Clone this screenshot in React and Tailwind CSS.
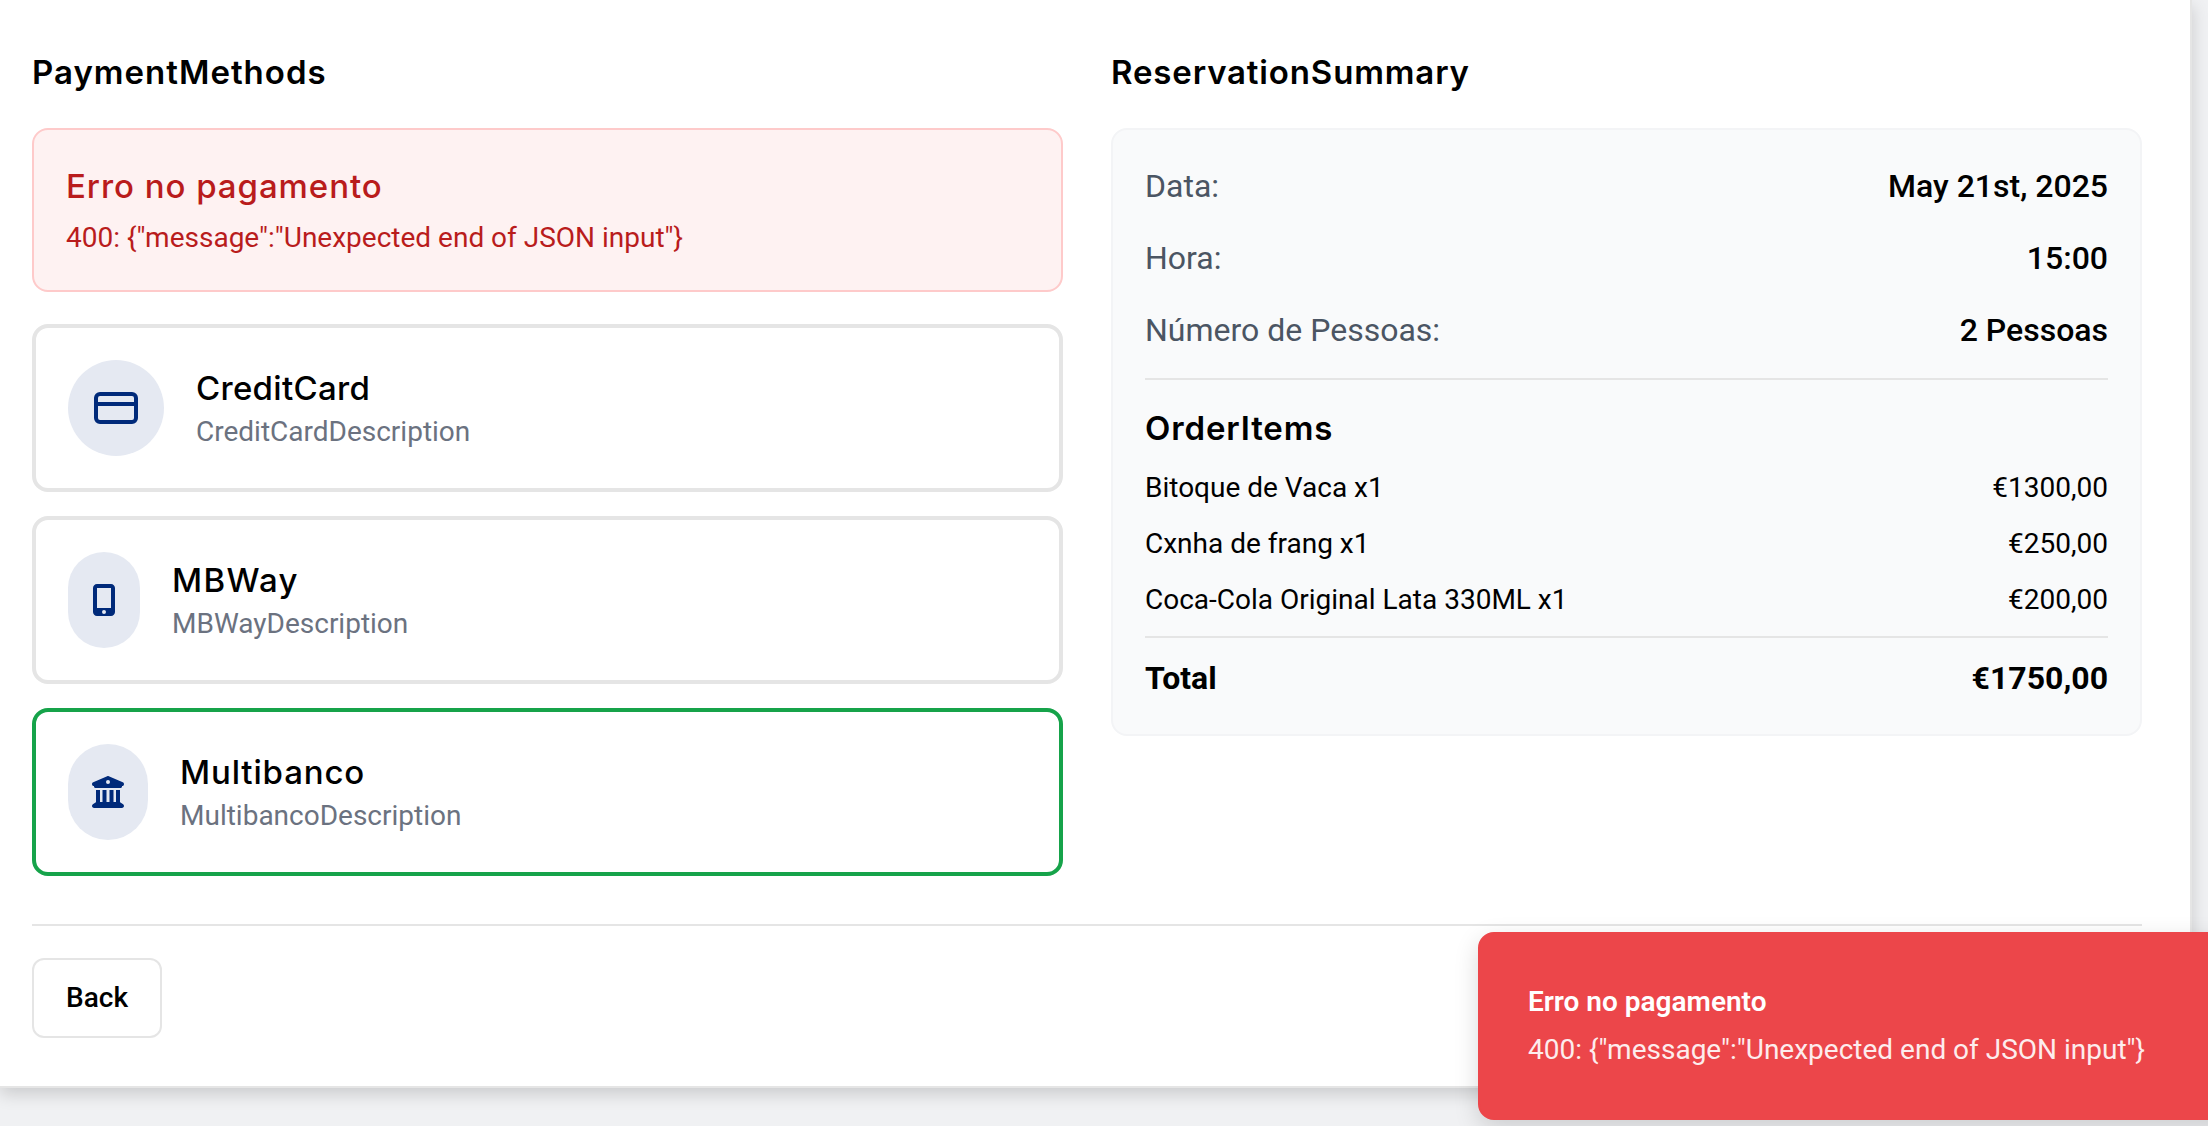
import { CreditCard } from 'lucide-react'
import { FaMobileScreenButton, FaBuildingColumns } from 'react-icons/fa6'

const methods = [
  { name: 'CreditCard', desc: 'CreditCardDescription', tracking: 'tracking-[0.3px]', icon: <CreditCard size={48} strokeWidth={2} /> },
  { name: 'MBWay', desc: 'MBWayDescription', tracking: 'tracking-[1.3px]', icon: <FaMobileScreenButton className="h-8 w-6" /> },
  { name: 'Multibanco', desc: 'MultibancoDescription', tracking: 'tracking-[0.85px]', icon: <FaBuildingColumns className="h-8 w-8" />, selected: true },
]

const details = [
  ['Data:', 'May 21st, 2025'],
  ['Hora:', '15:00'],
  ['Número de Pessoas:', '2 Pessoas'],
]

const items = [
  ['Bitoque de Vaca x1', '€1300,00'],
  ['Cxnha de frang x1', '€250,00'],
  ['Coca-Cola Original Lata 330ML x1', '€200,00'],
]

const headingFont = "font-['Inter',sans-serif]"
const errorText = '400: {"message":"Unexpected end of JSON input"}'

export default function App() {
  return (
    <div className="relative h-[1126px] overflow-hidden bg-[#f0f1f3] font-['Roboto',sans-serif] text-black">
      <div className="w-[2192px] border-r-2 border-b-2 border-[#e5e5e5] bg-white pt-12 pb-12 pl-8 pr-12 shadow-[0_6px_16px_rgba(0,0,0,0.16)]">
        <div className="grid grid-cols-2 gap-12">
          {/* Payment methods */}
          <div>
            <h2 className={`mb-8 text-[33px] leading-[48px] font-semibold tracking-[1px] ${headingFont}`}>PaymentMethods</h2>

            <div className="mb-8 rounded-2xl border-2 border-[#fecaca] bg-[#fef2f2] p-8">
              <h3 className={`text-[33px] leading-[48px] font-medium tracking-[0.95px] text-[#b91c1c] ${headingFont}`}>Erro no pagamento</h3>
              <p className="mt-2 text-[28px] leading-10 text-[#b91c1c]">{errorText}</p>
            </div>

            <div className="flex flex-col gap-6">
              {methods.map((m) => (
                <div
                  key={m.name}
                  className={`flex items-center gap-8 rounded-2xl border-4 bg-white p-8 ${m.selected ? 'border-[#16a34a]' : 'border-[#e5e5e5]'}`}
                >
                  <div className="flex h-24 items-center rounded-full bg-[#e5e9f2] p-6 text-[#002a7a]">{m.icon}</div>
                  <div>
                    <div className={`text-[33px] leading-[48px] font-medium ${m.tracking} ${headingFont}`}>{m.name}</div>
                    <div className="text-[28px] leading-10 text-[#6b7280]">{m.desc}</div>
                  </div>
                </div>
              ))}
            </div>
          </div>

          {/* Summary */}
          <div>
            <h2 className={`mb-8 text-[33px] leading-[48px] font-semibold tracking-[0.85px] ${headingFont}`}>ReservationSummary</h2>

            <div className="rounded-2xl border-2 border-[#f3f4f6] bg-[#f9fafb] p-8">
              <div className="flex flex-col gap-6 border-b-2 border-[#e5e5e5] pb-6">
                {details.map(([label, value]) => (
                  <div key={label} className="flex justify-between text-[32px] leading-[48px]">
                    <span className="text-[#4b5563]">{label}</span>
                    <span className="font-medium">{value}</span>
                  </div>
                ))}
              </div>

              <h3 className={`mt-6 mb-4 text-[33px] leading-[48px] font-semibold tracking-[0.85px] ${headingFont}`}>OrderItems</h3>
              <div className="flex flex-col gap-4 border-b-2 border-[#e5e5e5] pb-4">
                {items.map(([label, value]) => (
                  <div key={label} className="flex justify-between text-[28px] leading-10">
                    <span>{label}</span>
                    <span>{value}</span>
                  </div>
                ))}
              </div>

              <div className="mt-4 flex justify-between text-[32px] leading-[48px] font-bold">
                <span>Total</span>
                <span>€1750,00</span>
              </div>
            </div>
          </div>
        </div>

        {/* Footer */}
        <div className="mt-12 border-t-2 border-[#e5e5e5] pt-8">
          <button className="h-20 rounded-xl border-2 border-[#e5e5e5] bg-white px-8 text-[28px] font-medium">Back</button>
        </div>
      </div>

      {/* Toast */}
      <div className="absolute top-[932px] left-[1478px] w-[760px] rounded-2xl border-2 border-[#ec464a] bg-[#ec464a] p-12 text-white shadow-[0_8px_24px_rgba(0,0,0,0.15)]">
        <div className="text-[28px] leading-10 font-semibold">Erro no pagamento</div>
        <div className="mt-2 text-[28px] leading-10 opacity-90">{errorText}</div>
      </div>
    </div>
  )
}
